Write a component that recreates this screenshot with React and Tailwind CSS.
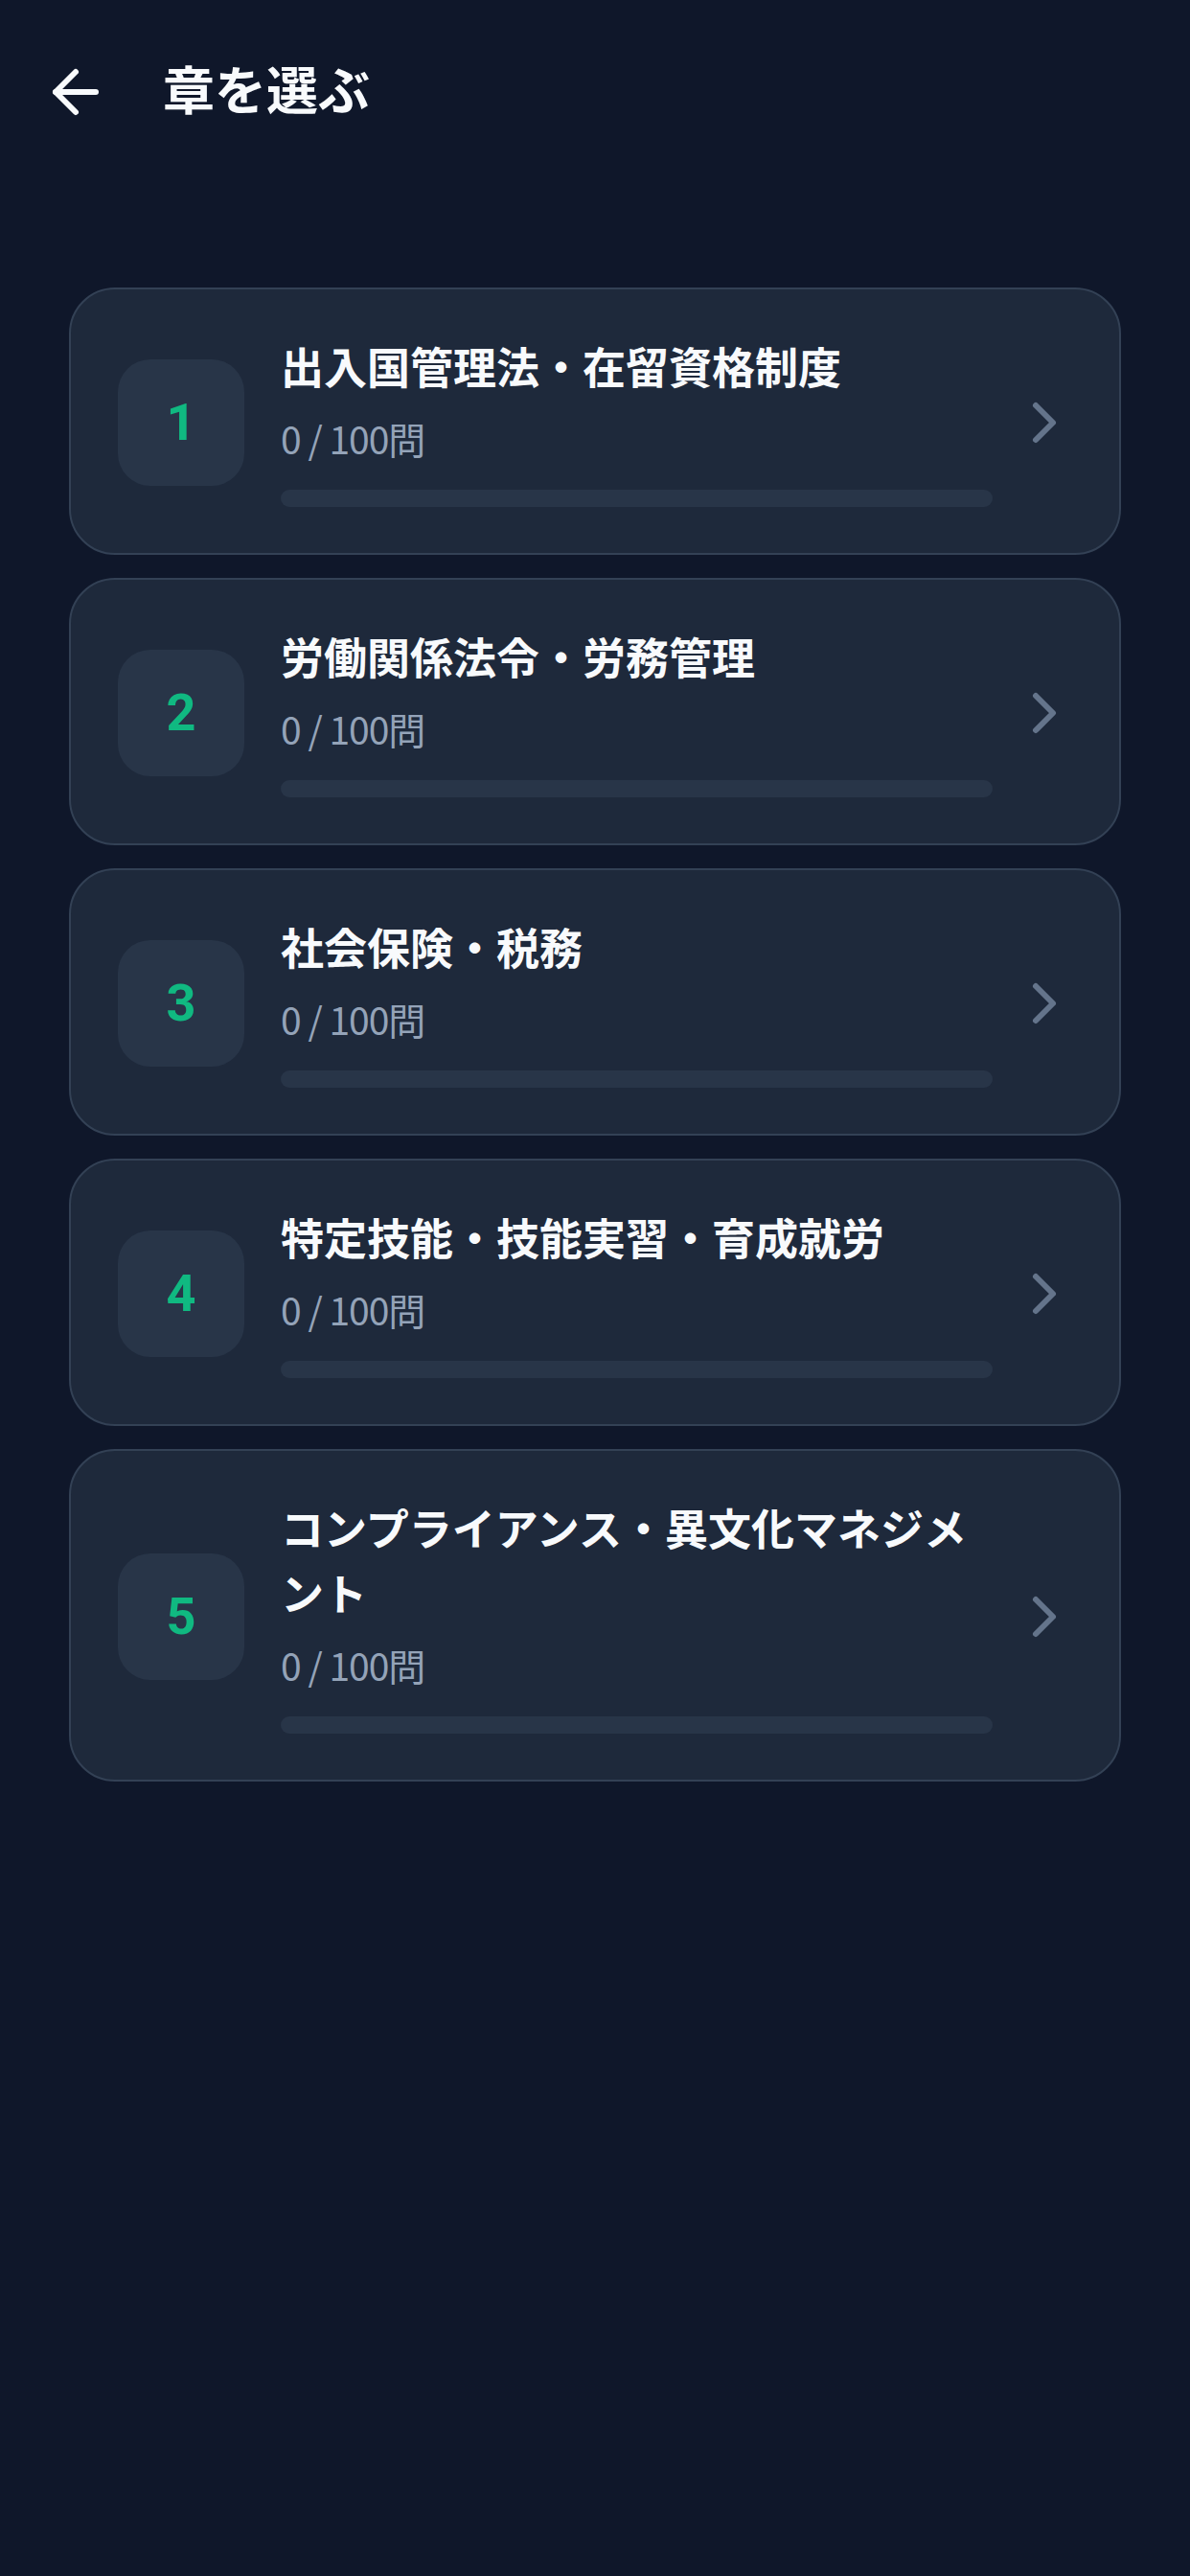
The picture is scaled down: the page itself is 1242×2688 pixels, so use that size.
import { ArrowLeft, ChevronRight } from "lucide-react";

const CHAPTERS = [
  { no: 1, title: "出入国管理法・在留資格制度", done: 0, total: 100 },
  { no: 2, title: "労働関係法令・労務管理", done: 0, total: 100 },
  { no: 3, title: "社会保険・税務", done: 0, total: 100 },
  { no: 4, title: "特定技能・技能実習・育成就労", done: 0, total: 100 },
  { no: 5, title: "コンプライアンス・異文化マネジメント", done: 0, total: 100 },
];

function ChapterCard({ no, title, done, total }) {
  const pct = total ? (done / total) * 100 : 0;
  return (
    <button
      type="button"
      className="flex w-full items-center rounded-[48px] border-2 border-[#334155] bg-[#1e293b] pt-[50px] pb-[48px] pl-[49px] pr-[42px] text-left"
    >
      {/* Chapter number */}
      <span className="flex h-[132px] w-[132px] shrink-0 items-center justify-center rounded-[34px] bg-[#283548] font-['Roboto',sans-serif] text-[54px] font-bold text-[#10b981]">
        {no}
      </span>

      <span className="ml-[38px] flex min-w-0 flex-1 flex-col">
        <span className="text-[45px] font-bold leading-[68px] text-[#f8fafc]">{title}</span>
        <span className="mt-[8px] font-['Noto_Sans_CJK_JP',sans-serif] text-[39px] leading-[58px] tracking-[-1px] text-[#94a3b8]">
          {done} / {total}問
        </span>
        <span className="mt-[25px] block h-[18px] w-full overflow-hidden rounded-full bg-[#283548]">
          <span className="block h-full rounded-full bg-[#10b981]" style={{ width: `${pct}%` }} />
        </span>
      </span>

      <ChevronRight className="ml-[18px] h-[72px] w-[72px] shrink-0 text-[#64748b]" strokeWidth={2} />
    </button>
  );
}

export default function App() {
  return (
    <div className="min-h-[2688px] bg-[#0f172a] font-['Roboto','Noto_Sans_CJK_JP',sans-serif]">
      {/* Header */}
      <header className="flex h-[192px] items-center gap-[55px] pl-[43px]">
        <button type="button" aria-label="戻る" className="text-[#f8fafc]">
          <ArrowLeft className="h-[72px] w-[72px]" strokeWidth={2} />
        </button>
        <h1 className="text-[54px] font-bold text-[#f8fafc]">章を選ぶ</h1>
      </header>

      {/* Chapter list */}
      <main className="flex flex-col gap-[24px] px-[72px] pt-[108px]">
        {CHAPTERS.map((c) => (
          <ChapterCard key={c.no} {...c} />
        ))}
      </main>
    </div>
  );
}
